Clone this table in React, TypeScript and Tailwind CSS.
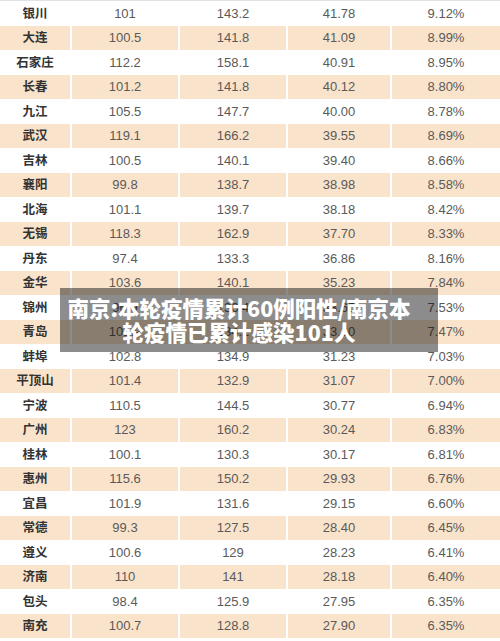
const rows: string[][] = [
  ["银川", "101", "143.2", "41.78", "9.12%"],
  ["大连", "100.5", "141.8", "41.09", "8.99%"],
  ["石家庄", "112.2", "158.1", "40.91", "8.95%"],
  ["长春", "101.2", "141.8", "40.12", "8.80%"],
  ["九江", "105.5", "147.7", "40.00", "8.78%"],
  ["武汉", "119.1", "166.2", "39.55", "8.69%"],
  ["吉林", "100.5", "140.1", "39.40", "8.66%"],
  ["襄阳", "99.8", "138.7", "38.98", "8.58%"],
  ["北海", "101.1", "139.7", "38.18", "8.42%"],
  ["无锡", "118.3", "162.9", "37.70", "8.33%"],
  ["丹东", "97.4", "133.3", "36.86", "8.16%"],
  ["金华", "103.6", "140.1", "35.23", "7.84%"],
  ["锦州", "96.9", "136.4", "33.65", "7.53%"],
  ["青岛", "101.9", "134.1", "33.30", "7.47%"],
  ["蚌埠", "102.8", "134.9", "31.23", "7.03%"],
  ["平顶山", "101.4", "132.9", "31.07", "7.00%"],
  ["宁波", "110.5", "144.5", "30.77", "6.94%"],
  ["广州", "123", "160.2", "30.24", "6.83%"],
  ["桂林", "100.1", "130.3", "30.17", "6.81%"],
  ["惠州", "115.6", "150.2", "29.93", "6.76%"],
  ["宜昌", "101.9", "131.6", "29.15", "6.60%"],
  ["常德", "99.3", "127.5", "28.40", "6.45%"],
  ["遵义", "100.6", "129", "28.23", "6.41%"],
  ["济南", "110", "141", "28.18", "6.40%"],
  ["包头", "98.4", "125.9", "27.95", "6.35%"],
  ["南充", "100.7", "128.8", "27.90", "6.35%"],
];

function Row({ cells, shaded }: { cells: string[]; shaded: boolean }) {
  const bg = shaded ? "bg-[#fae3cb]" : "bg-white";
  return (
    <div className="grid h-[24.5px] grid-cols-[72px_108px_108px_104px_108px]">
      {cells.map((c, i) => (
        <div
          key={i}
          className={`flex items-center justify-center ${bg} ${
            i < 4 ? "border-r-2 border-white" : ""
          } ${
            i === 0
              ? "font-['Noto_Sans_CJK_SC',sans-serif] text-[12.5px] font-bold text-[#333]"
              : "font-['Liberation_Sans',sans-serif] text-[13px] text-[#5a5a5a]"
          }`}
        >
          {c}
        </div>
      ))}
    </div>
  );
}

export default function App() {
  return (
    <div className="relative h-[641px] w-[500px] overflow-hidden bg-white">
      <div className="flex flex-col border-t border-[#e2e2e2]">
        {rows.map((r, i) => (
          <Row key={r[0]} cells={r} shaded={i % 2 === 1} />
        ))}
      </div>

      {/* caption laid over the table */}
      <div className="absolute left-[60px] top-[288px] flex h-[64px] w-[378px] flex-col items-center justify-center bg-black/45 pr-[20px] font-['Noto_Sans_CJK_SC',sans-serif] text-[21.5px] font-black leading-[24px] text-white">
        <span>南京:本轮疫情累计60例阳性/南京本</span>
        <span>轮疫情已累计感染101人</span>
      </div>
    </div>
  );
}
